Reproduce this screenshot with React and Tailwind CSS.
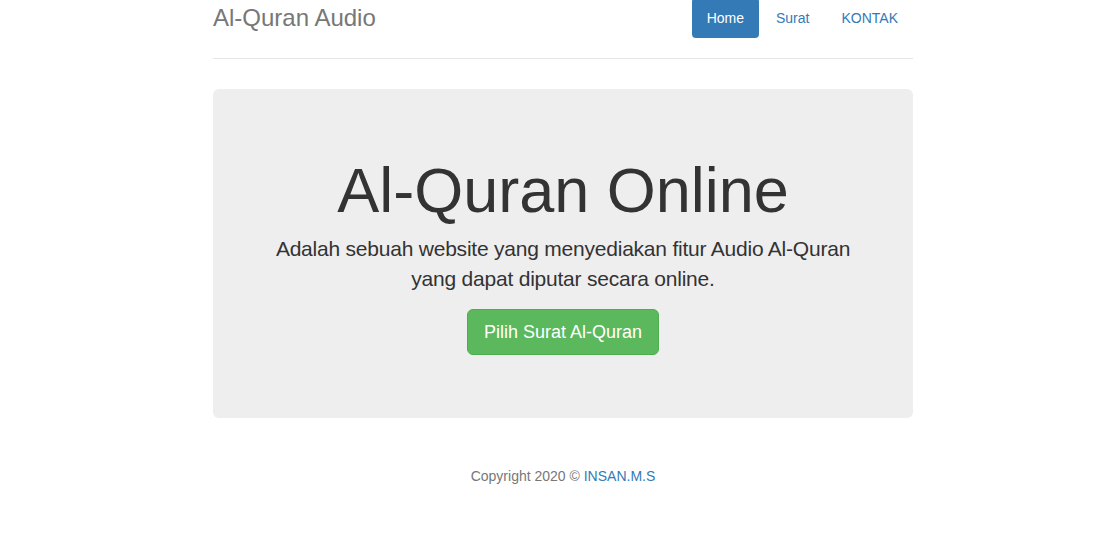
export default function App() {
    return (
        <div className="min-h-screen bg-white text-[#333] text-[14px] leading-[1.42857] font-['Liberation_Sans',Arial,sans-serif]">
            <div className="ml-[198px] w-[730px] px-[15px] mt-[-2px]">
                <div className="flex items-center justify-between border-b border-[#e5e5e5] pb-[20px]">
                    <h3 className="text-[24px] leading-[40px] text-[#777] font-medium">Al-Quran Audio</h3>
                    <ul className="flex gap-[2px]">
                        <li><a href="#" className="block rounded-[4px] bg-[#337ab7] px-[15px] py-[10px] leading-[20px] text-white">Home</a></li>
                        <li><a href="#" className="block rounded-[4px] px-[15px] py-[10px] leading-[20px] text-[#337ab7]">Surat</a></li>
                        <li><a href="#" className="block rounded-[4px] px-[15px] py-[10px] leading-[20px] text-[#337ab7]">KONTAK</a></li>
                    </ul>
                </div>

                <div className="mt-[30px] mb-[30px] rounded-[6px] bg-[#eee] px-[60px] py-[48px] text-center">
                    <h1 className="mt-[20px] mb-[10px] text-[63px] leading-[67px] font-medium">Al-Quran Online</h1>
                    <p className="mb-[15px] text-[21px] leading-[30px] tracking-[-0.22px]">Adalah sebuah website yang menyediakan fitur Audio Al-Quran yang dapat diputar secara online.</p>
                    <p className="mb-[15px]">
                        <a href="#" className="inline-block rounded-[6px] border border-[#4cae4c] bg-[#5cb85c] px-[16px] py-[10px] text-[18px] leading-[24px] text-white">Pilih Surat Al-Quran</a>
                    </p>
                </div>

                <footer className="pt-[19px] text-center text-[#777]">
                    <p>Copyright 2020 © <a href="#" className="text-[#337ab7]">INSAN.M.S</a></p>
                </footer>
            </div>
        </div>
    );
}
